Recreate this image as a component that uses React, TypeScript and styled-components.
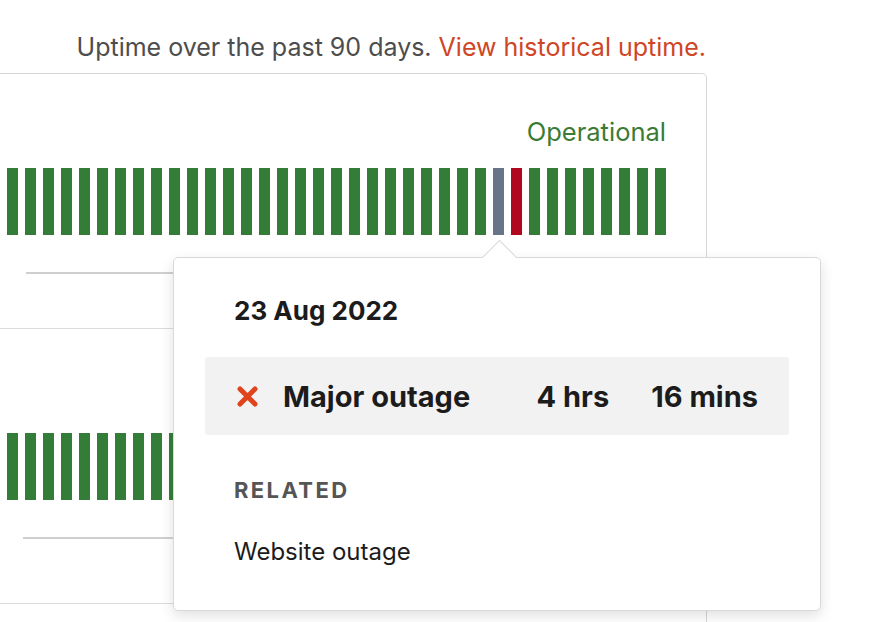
import React from "react";
import styled, { createGlobalStyle } from "styled-components";

const GlobalStyle = createGlobalStyle`
  html, body {
    margin: 0;
    padding: 0;
    background: #ffffff;
  }
  body {
    font-family: "Inter", "Lato", sans-serif;
    color: #1f1f1f;
    overflow: hidden;
  }
`;

const Page = styled.div`
  position: relative;
  width: 896px;
  height: 622px;
  overflow: hidden;
`;

const Caption = styled.p`
  margin: 0;
  padding: 32px 190px 0 0;
  height: 41px;
  text-align: right;
  white-space: nowrap;
  font-size: 25px;
  line-height: 30px;
  color: #4d4d4d;
  a {
    color: #cf4526;
    text-decoration: none;
  }
`;

// the card runs past the left edge of the window, only its right part is seen
const Card = styled.div`
  box-sizing: border-box;
  margin-left: -300px;
  width: 1007px;
  border: 1px solid #d6d6d6;
  border-radius: 5px;
`;

const Section = styled.div<{ $top: number; $bottom: number }>`
  padding: ${(p) => p.$top}px 40px ${(p) => p.$bottom}px 40px;
  border-bottom: 1px solid #dcdcdc;
`;

const StatusRow = styled.div`
  display: flex;
  justify-content: space-between;
  font-size: 25.5px;
  line-height: 30px;
`;

const Name = styled.span`
  color: #333;
`;

const Status = styled.span`
  color: #3b7b35;
`;

const Bars = styled.div`
  display: flex;
  justify-content: flex-end;
  gap: 7px;
  margin-top: 21px;
  height: 67px;
  overflow: hidden;
`;

const Bar = styled.span<{ $tone: "ok" | "none" | "major" }>`
  flex-shrink: 0;
  width: 11px;
  height: 100%;
  background: ${(p) =>
    p.$tone === "major" ? "#b0081f" : p.$tone === "none" ? "#687589" : "#347d39"};
`;

const Legend = styled.div<{ $inset: number }>`
  display: flex;
  align-items: center;
  gap: 12px;
  margin-top: 28px;
  padding-left: ${(p) => p.$inset}px;
  height: 20px;
  font-size: 15px;
  color: #888;
`;

const LegendLine = styled.span`
  flex: 1;
  height: 2px;
  background: #cfcfcf;
`;

const Popover = styled.div`
  position: absolute;
  left: 173px;
  top: 257px;
  box-sizing: border-box;
  width: 648px;
  padding: 38px 31px 44px;
  background: #ffffff;
  border: 1px solid #d9d9d9;
  border-radius: 5px;
  box-shadow: 0 5px 14px rgba(0, 0, 0, 0.12);
  &::before {
    content: "";
    position: absolute;
    top: -13px;
    left: 313px;
    width: 24px;
    height: 24px;
    background: #ffffff;
    border-top: 1px solid #d9d9d9;
    border-left: 1px solid #d9d9d9;
    transform: rotate(45deg);
  }
`;

const DateLabel = styled.div`
  padding-left: 29px;
  font-size: 26px;
  line-height: 30px;
  font-weight: 700;
  color: #1c1c1c;
`;

const OutageBox = styled.div`
  display: flex;
  align-items: center;
  margin-top: 31px;
  height: 78px;
  padding: 0 31px 0 32px;
  background: #f2f2f3;
  border-radius: 3px;
  font-size: 29px;
  font-weight: 700;
  color: #1c1c1c;
`;

const OutageLabel = styled.span`
  flex: 1;
  margin-left: 25px;
`;

const Duration = styled.span`
  margin-left: 42px;
`;

const RelatedTitle = styled.div`
  margin-top: 41px;
  padding-left: 29px;
  font-size: 22px;
  line-height: 28px;
  font-weight: 700;
  letter-spacing: 2.4px;
  text-transform: uppercase;
  color: #555555;
`;

const RelatedItem = styled.div`
  margin-top: 34px;
  padding-left: 29px;
  font-size: 24px;
  line-height: 28px;
  color: #1c1c1c;
`;

function CrossIcon() {
  return (
    <svg width="21" height="21" viewBox="0 0 21 21">
      <path d="M3 3 L18 18 M18 3 L3 18" stroke="#e0441c" strokeWidth="5" strokeLinecap="round" />
    </svg>
  );
}

type Tone = "ok" | "none" | "major";

const firstDays: Tone[] = Array.from({ length: 90 }, (_, i) =>
  i === 80 ? "none" : i === 81 ? "major" : "ok"
);
const secondDays: Tone[] = Array.from({ length: 90 }, () => "ok");

function Component({
  days,
  top,
  bottom,
  inset,
}: {
  days: Tone[];
  top: number;
  bottom: number;
  inset: number;
}) {
  return (
    <Section $top={top} $bottom={bottom}>
      <StatusRow>
        <Name>Website</Name>
        <Status>Operational</Status>
      </StatusRow>
      <Bars>
        {days.map((tone, i) => (
          <Bar key={i} $tone={tone} />
        ))}
      </Bars>
      <Legend $inset={inset}>
        <LegendLine />
        <span>99.8 % uptime</span>
        <LegendLine />
        <span>Today</span>
      </Legend>
    </Section>
  );
}

export default function App() {
  return (
    <Page>
      <GlobalStyle />
      <Caption>
        Uptime over the past 90 days. <a href="#">View historical uptime.</a>
      </Caption>
      <Card>
        <Component days={firstDays} top={43} bottom={45} inset={285} />
        <Component days={secondDays} top={53} bottom={55} inset={282} />
        <Component days={secondDays} top={53} bottom={55} inset={282} />
      </Card>
      <Popover>
        <DateLabel>23 Aug 2022</DateLabel>
        <OutageBox>
          <CrossIcon />
          <OutageLabel>Major outage</OutageLabel>
          <span>4 hrs</span>
          <Duration>16 mins</Duration>
        </OutageBox>
        <RelatedTitle>Related</RelatedTitle>
        <RelatedItem>Website outage</RelatedItem>
      </Popover>
    </Page>
  );
}
